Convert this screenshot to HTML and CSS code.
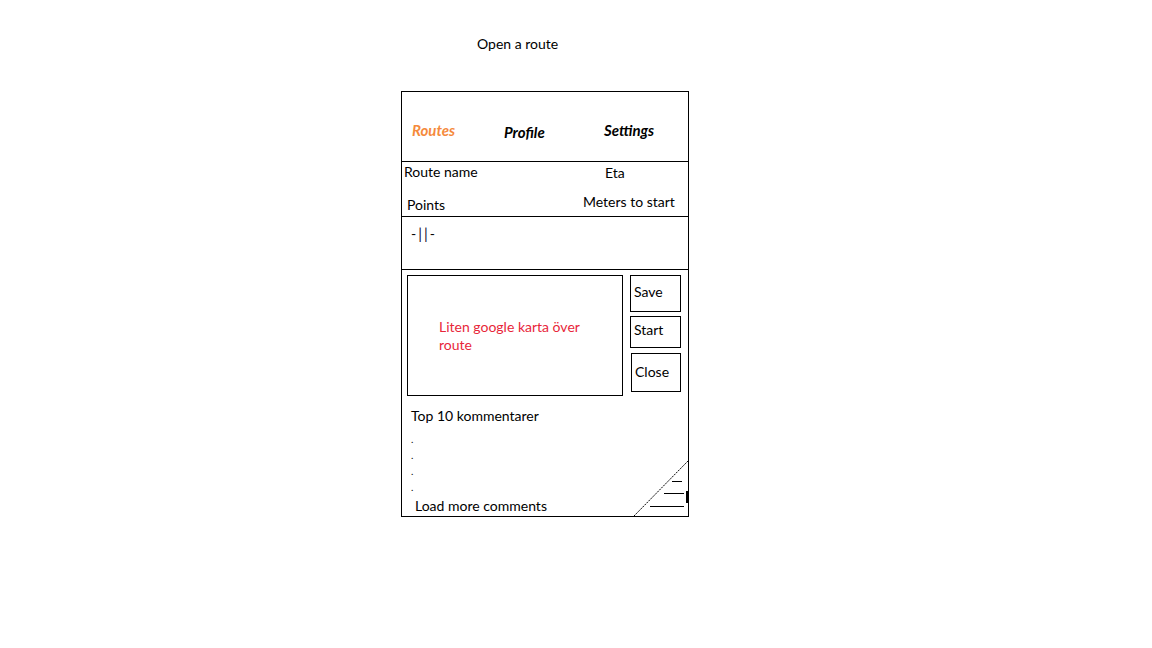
FILE: index.html
```html
<!DOCTYPE html>
<html>
<head>
<meta charset="utf-8">
<link rel="stylesheet" href="styles.css">
</head>
<body>
<div class="page">
  <div class="title">Open a route</div>
  <div class="phone">
    <nav class="nav">
      <span class="tab tab-routes">Routes</span>
      <span class="tab tab-profile">Profile</span>
      <span class="tab tab-settings">Settings</span>
    </nav>
    <section class="info">
      <span class="route-name">Route name</span>
      <span class="eta">Eta</span>
      <span class="points">Points</span>
      <span class="meters">Meters to start</span>
    </section>
    <section class="controls">
      <span class="pause">-<span class="bars">||</span>-</span>
    </section>
    <section class="main">
      <div class="top">
        <div class="map"><p>Liten google karta över route</p></div>
        <div class="buttons">
          <div class="btn btn-save">Save</div>
          <div class="btn btn-start">Start</div>
          <div class="btn btn-close">Close</div>
        </div>
      </div>
      <div class="comments-title">Top 10 kommentarer</div>
      <ul class="dots">
        <li>.</li><li>.</li><li>.</li><li>.</li>
      </ul>
      <div class="load-more">Load more comments</div>
      <svg class="corner" width="54" height="55" viewBox="0 0 54 55">
        <line x1="0" y1="55" x2="54" y2="0" stroke="#000" stroke-width="1" stroke-dasharray="2 1"/>
        <line x1="38" y1="20.5" x2="48" y2="20.5" stroke="#000" stroke-width="1"/>
        <line x1="30" y1="32.5" x2="50" y2="32.5" stroke="#000" stroke-width="1"/>
        <line x1="16" y1="45.5" x2="50" y2="45.5" stroke="#000" stroke-width="1"/>
        <rect x="52" y="30" width="2" height="12" fill="#000"/>
      </svg>
    </section>
  </div>
</div>
</body>
</html>
```

FILE: styles.css
```css
html, body {
  margin: 0;
  padding: 0;
  background: #fff;
}
body {
  font-family: Lato, "Open Sans", "Liberation Sans", sans-serif;
  font-size: 14px;
  color: #000;
}
.page {
  padding-top: 35px;
}
.title {
  margin-left: 477px;
  height: 18px;
  line-height: 18px;
}
.phone {
  margin-left: 401px;
  margin-top: 38px;
  width: 286px;
  height: 424px;
  border: 1px solid #000;
  display: flex;
  flex-direction: column;
}
.nav {
  height: 70px;
  box-sizing: border-box;
  border-bottom: 1px solid #000;
  display: grid;
  grid-template-columns: 92px 100px auto;
  align-items: start;
  padding-left: 10px;
}
.tab {
  font-weight: bold;
  font-style: italic;
  font-size: 15px;
  line-height: 16px;
}
.tab-routes {
  color: #f58a3c;
  margin-top: 30px;
}
.tab-profile {
  margin-top: 32px;
}
.tab-settings {
  margin-top: 30px;
}
.info {
  height: 54px;
  border-bottom: 1px solid #000;
  display: grid;
  grid-template-columns: 181px auto;
  grid-template-rows: 19px 35px;
  line-height: 16px;
}
.route-name {
  padding-left: 2px;
  padding-top: 2px;
}
.eta {
  padding-left: 22px;
  padding-top: 3px;
}
.points {
  padding-left: 5px;
  padding-top: 16px;
}
.meters {
  padding-top: 13px;
  white-space: nowrap;
}
.controls {
  height: 52px;
  border-bottom: 1px solid #000;
}
.pause {
  display: inline-block;
  margin-left: 9px;
  margin-top: 8px;
  line-height: 16px;
  letter-spacing: 2px;
}
.bars {
  color: #1a1030;
  font-size: 15px;
}
.main {
  flex: 1;
  position: relative;
  padding: 5px 0 0 5px;
}
.top {
  display: flex;
  align-items: flex-start;
}
.map {
  width: 214px;
  height: 119px;
  border: 1px solid #000;
}
.map p {
  margin: 42px 0 0 31px;
  color: #e8263a;
  line-height: 18px;
  width: 160px;
}
.buttons {
  margin-left: 7px;
  display: flex;
  flex-direction: column;
}
.btn {
  border: 1px solid #000;
  box-sizing: border-box;
  padding-left: 3px;
  line-height: 16px;
}
.btn-save {
  width: 51px;
  height: 37px;
  padding-top: 8px;
}
.btn-start {
  width: 51px;
  height: 32px;
  margin-top: 4px;
  padding-top: 5px;
}
.btn-close {
  width: 50px;
  height: 39px;
  margin-top: 5px;
  margin-left: 1px;
  padding-top: 10px;
}
.comments-title {
  margin-left: 4px;
  margin-top: 12px;
  line-height: 16px;
}
.dots {
  list-style: none;
  margin: 7px 0 0 4px;
  padding: 0;
  font-size: 10px;
}
.dots li {
  height: 16px;
  line-height: 16px;
}
.load-more {
  margin-left: 8px;
  margin-top: 3px;
  line-height: 16px;
}
.corner {
  position: absolute;
  right: 0;
  bottom: 0;
}
```
